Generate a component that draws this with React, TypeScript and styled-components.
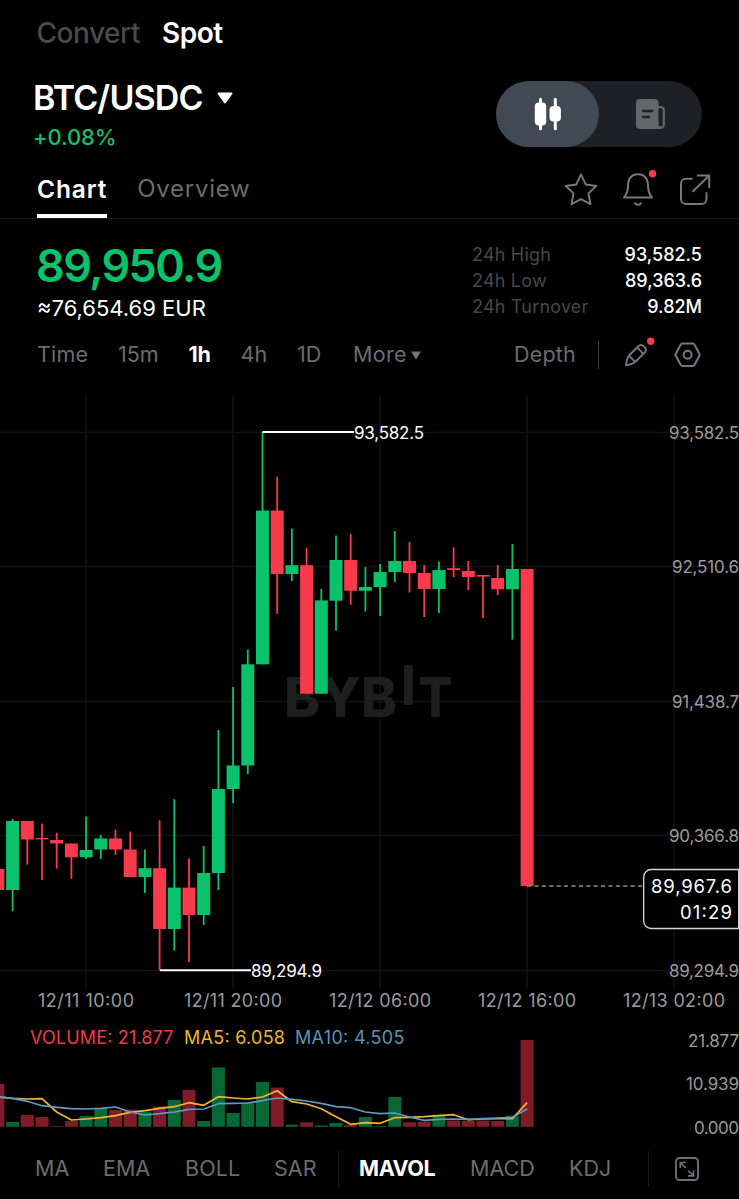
import React from "react";
import styled, { createGlobalStyle } from "styled-components";

const c = {
  green: "#0ac26b",
  red: "#f9394c",
  grey: "#6b6c6f",
  dim: "#47484b",
  axis: "#9b9b9d",
  grid: "#131315",
};

const GlobalStyle = createGlobalStyle`
  html, body { margin: 0; background: #000; }
  body { font-family: Inter, "Liberation Sans", sans-serif; color: #fff; }
  * { box-sizing: border-box; }
  svg { display: block; overflow: visible; }
`;

const Screen = styled.main`
  width: 739px;
  height: 1199px;
  overflow: hidden;
  background: #000;
  display: flex;
  flex-direction: column;

  > * {
    flex-shrink: 0;
  }
`;

const Text = styled.span<{ $size: number; $weight?: number; $color?: string; $track?: number }>`
  display: block;
  margin: 0;
  white-space: nowrap;
  line-height: 1;
  font-size: ${(p) => p.$size}px;
  font-weight: ${(p) => p.$weight ?? 400};
  color: ${(p) => p.$color ?? "#fff"};
  letter-spacing: ${(p) => p.$track ?? 0}px;
`;

const ModeRow = styled.nav`
  height: 66px;
  padding-left: 36.5px;
  display: grid;
  grid-template-columns: 125.500px auto;
  align-items: center;
`;

const PairRow = styled.header`
  height: 92px;
  padding: 15px 37px 0 33px;
  display: flex;
  justify-content: space-between;
  align-items: flex-start;
`;

const Pair = styled.div`
  display: flex;
  flex-direction: column;
  gap: 11px;
`;

const PairName = styled.div`
  display: flex;
  align-items: center;
  gap: 14px;
`;

const Switch = styled.div`
  width: 206px;
  height: 66px;
  border-radius: 33px;
  background: #1f2025;
  display: flex;
`;

const SwitchSide = styled.button<{ $on?: boolean }>`
  width: 103px;
  height: 66px;
  border: 0;
  padding: 0;
  border-radius: 33px;
  background: ${(p) => (p.$on ? "#414954" : "transparent")};
  display: grid;
  place-items: center;
`;

const ViewTabs = styled.nav`
  height: 61px;
  padding: 0 28px 0 37px;
  border-bottom: 1px solid #1b1b1d;
  display: flex;
  justify-content: space-between;
`;

const TabGroup = styled.div`
  display: flex;
  gap: 30px;
`;

const ViewTab = styled.div<{ $on?: boolean }>`
  height: 60px;
  padding-top: 19px;
  border-bottom: ${(p) => (p.$on ? "4px solid #fff" : "0")};
`;

const Actions = styled.div`
  display: flex;
  gap: 25px;
  padding-top: 14px;
`;

const Ticker = styled.section`
  height: 110px;
  padding: 24px 37px 0 36px;
  display: flex;
  justify-content: space-between;
`;

const Price = styled.div`
  display: flex;
  flex-direction: column;
  gap: 9px;

  > :last-child {
    padding-left: 1px;
  }
`;

const Stats = styled.dl`
  margin: -0.500px 0 0;
  width: 230px;
  display: flex;
  flex-direction: column;
`;

const Stat = styled.div`
  height: 25.7px;
  display: flex;
  justify-content: space-between;
  align-items: center;
`;

const Intervals = styled.nav`
  height: 52px;
  padding-left: 37px;
  display: grid;
  grid-template-columns: 81px 70.500px 52px 56.500px 56px 58px 103px 84px 27px 49px 27px;
  align-items: center;
`;

const Divider = styled.i<{ $h: number; $color: string }>`
  width: 1px;
  height: ${(p) => p.$h}px;
  background: ${(p) => p.$color};
`;

const ChartArea = styled.section`
  height: 749px;
`;

const IndicatorBar = styled.footer`
  height: 61px;
  margin-top: 8px;
  padding-left: 35px;
  display: grid;
  grid-template-columns: 68px 82px 89px 64px 21px 111px 99px 79px 27px 30px;
  align-items: center;
`;

const FONT = 'Inter, "Liberation Sans", sans-serif';

type Candle = ["g" | "r", number, number, number, number, number];
// colour, high, body top, body bottom, low, top of the volume bar
const candles: Candle[] = [
  ["r", 869, 869, 890, 890, 1084],
  ["g", 819, 821, 890, 911.3, 1122],
  ["r", 821, 821, 839.5, 864.6, 1115],
  ["r", 823.6, 838, 839.4, 880, 1117],
  ["r", 832.8, 840, 843.5, 868.6, 1126],
  ["r", 843.5, 843.5, 857.3, 878.8, 1121],
  ["g", 816.5, 850, 857.3, 859, 1116],
  ["g", 835, 838.5, 849.5, 859, 1108],
  ["r", 829.5, 838.5, 849.5, 855, 1110],
  ["r", 831.6, 849.5, 877, 877, 1109.5],
  ["g", 849.5, 868.2, 877, 893, 1111.5],
  ["r", 820.2, 868.2, 929, 970.5, 1106.5],
  ["g", 799.2, 887.6, 929, 950.7, 1100],
  ["r", 858.4, 887.6, 915, 962, 1090],
  ["g", 846, 873, 915, 925, 1121],
  ["g", 730, 789, 873, 890, 1067.4],
  ["g", 687, 765.5, 789, 803, 1113],
  ["g", 649.5, 664.3, 765.5, 774, 1102.5],
  ["g", 432, 510.5, 664.3, 664.3, 1082],
  ["r", 476.8, 510.5, 574, 613.8, 1087.6],
  ["g", 528.6, 565.2, 574, 581, 1124.7],
  ["r", 547.7, 565.2, 693.7, 693.7, 1122.3],
  ["g", 589, 600.4, 693.7, 693.7, 1125.4],
  ["g", 535.5, 560, 600.7, 630.7, 1123],
  ["r", 534, 560, 590.8, 604.8, 1125],
  ["g", 567, 587, 590.8, 611.6, 1117],
  ["g", 564, 572, 587.2, 616, 1126],
  ["g", 531, 561, 572, 582, 1097],
  ["r", 542, 561, 573, 592.5, 1122.3],
  ["r", 565, 573, 589, 617, 1121.7],
  ["g", 561.5, 570, 589, 613, 1114.7],
  ["r", 547.5, 568.2, 570, 577.2, 1120.5],
  ["r", 561, 571, 577, 590, 1121],
  ["r", 575, 575, 576.6, 618, 1120.5],
  ["r", 565, 578, 589.3, 595, 1121],
  ["g", 544, 569, 589.3, 639.7, 1115.6],
  ["r", 569, 569, 886, 886, 1040],
];

const STEP = 14.7;
const center = (i: number) => -2.1 + i * STEP;

const ma5 = [
  246, 250, 252, 251, 291, 315, 312, 308, 302, 292, 287, 280, 275, 263, 271, 245, 249, 252, 246, 227, 260, 267, 281,
  305, 328, 323, 325, 308, 307, 305, 302, 299, 314, 312, 311, 311, 263,
];
const ma10 = [
  246, 250, 259, 272, 277, 281, 282, 280, 276, 291, 300, 296, 291, 283, 282, 266, 265, 264, 257, 249, 253, 258, 265,
  275, 278, 291, 296, 294, 306, 316, 313, 312, 313, 311, 309, 307, 282,
];
const toPoints = (v: number[]) => v.map((y, i) => `${center(i).toFixed(1)},${(1015 + y / 3).toFixed(1)}`).join(" ");

const priceLabels: [number, string, number][] = [
  [432.5, "93,582.5", 70],
  [566.5, "92,510.6", 67],
  [701.5, "91,438.7", 67],
  [835.5, "90,366.8", 70],
  [970.5, "89,294.9", 70],
];
const timeLabels: [number, string, number, number][] = [
  [86, "12/11 10:00", 38, 96],
  [233, "12/11 20:00", 184, 98],
  [380, "12/12 06:00", 329, 102],
  [527, "12/12 16:00", 478, 98],
  [674, "12/13 02:00", 623, 102],
];
const volumeLabels: [number, string, number][] = [
  [1047, "21.877", 51],
  [1090, "10.939", 53],
  [1134, "0.000", 45],
];

const StarIcon = () => (
  <svg width="34" height="34" viewBox="563 172 34 34" fill="none" stroke="#77787b" strokeWidth="2" strokeLinejoin="round">
    <path d="M581 174.500l4.700 9.900 10.600 1.500-7.800 7.500 2 10.700-9.500-5-9.500 5 2-10.700-7.800-7.500 10.600-1.500z" />
  </svg>
);
const BellIcon = () => (
  <svg width="32" height="34" viewBox="622 172 32 34" fill="none" stroke="#77787b" strokeWidth="2" strokeLinecap="round" strokeLinejoin="round">
    <path d="M624 197.500h28c-2.600-3.200-3.800-6-3.900-10.500-.1-8-3.600-12.700-10.100-12.700s-10 4.700-10.100 12.700c-.1 4.500-1.300 7.300-3.900 10.500z" />
    <path d="M635 203.300c1.700 2 4.300 2 6 0" />
    <circle cx="652.500" cy="173.700" r="3.700" fill={c.red} stroke="none" />
  </svg>
);
const ShareIcon = () => (
  <svg width="32" height="34" viewBox="679 172 32 34" fill="none" stroke="#77787b" strokeWidth="2">
    <path d="M692.500 178.800H686a5 5 0 0 0-5 5V199a5 5 0 0 0 5 5h15.500a5 5 0 0 0 5-5v-6.800M697 175.500h12.200V188M709 175.700L692.500 191.800" />
  </svg>
);
const CandleIcon = () => (
  <svg width="28" height="34" viewBox="534 97 28 34" fill="#fff">
    <rect x="534.800" y="102.500" width="11.400" height="23" rx="4" />
    <rect x="539" y="97.700" width="3" height="32.500" rx="1.500" />
    <rect x="549.500" y="106" width="11.400" height="15.500" rx="4" />
    <rect x="553.800" y="97.700" width="3" height="32.500" rx="1.500" />
  </svg>
);
const NewsIcon = () => (
  <svg width="30" height="32" viewBox="636 98 30 32">
    <path d="M656 107.200h5.200a2.600 2.600 0 0 1 2.600 2.600v14.700a3.500 3.500 0 0 1-3.500 3.500H650" fill="none" stroke="#65666a" strokeWidth="2.200" />
    <path d="M640 99h14.500a4 4 0 0 1 4 4v26H640a4 4 0 0 1-4-4v-22a4 4 0 0 1 4-4z" fill="#65666a" />
    <path d="M657.500 126h3.500v3h-3.500z" fill="#65666a" />
    <path d="M643 111h9.500M643 117h6" stroke="#1f2025" strokeWidth="2.300" strokeLinecap="round" />
  </svg>
);
const PencilIcon = () => (
  <svg width="24" height="24" viewBox="625 342 24 24" fill="none" stroke="#77787b" strokeWidth="1.900" strokeLinejoin="round">
    <path d="M626.700 364.300q-.8-.3-.7-1.300 .6-4.500 2.700-8L638.300 345.200a4 4 0 0 1 5.400 0l1 1a4 4 0 0 1 0 5.400L634.900 361.300q-3.500 2.200-8.200 3z" />
    <path d="M629.200 354.800l5.900 6M637.300 346.700l6.100 6.200" />
    <circle cx="650.700" cy="340.200" r="3.700" fill={c.red} stroke="none" />
  </svg>
);
const HexIcon = () => (
  <svg width="27" height="26" viewBox="674 342 27 26" fill="none" stroke="#77787b" strokeWidth="2" strokeLinejoin="round">
    <path d="M682.500 343.500h10.200a2 2 0 0 1 1.700 1l5 9.200a2 2 0 0 1 0 2l-5 9.200a2 2 0 0 1-1.700 1h-10.200a2 2 0 0 1-1.700-1l-5-9.200a2 2 0 0 1 0-2l5-9.200a2 2 0 0 1 1.700-1z" />
    <circle cx="687.600" cy="354.700" r="4" />
  </svg>
);
const ExpandIcon = () => (
  <svg width="24" height="24" viewBox="675.500 1156 24 24" fill="none" stroke="#6d6e71" strokeWidth="1.900">
    <rect x="676.500" y="1157" width="22" height="22" rx="3.500" />
    <path d="M680.800 1167v-5.500h5.500M681.200 1162l5 4.900M694 1169.500v5.300h-5.500M693.700 1174.500l-5-4.900" strokeWidth="1.700" />
  </svg>
);

function Chart() {
  return (
    <svg width="739" height="749" viewBox="0 381 739 749" fontFamily={FONT}>
      <g stroke={c.grid} strokeWidth="1.500">
        {priceLabels.map(([y]) => (
          <line key={y} x1="0" x2="739" y1={y} y2={y} />
        ))}
        {timeLabels.map(([x]) => (
          <line key={x} x1={x} x2={x} y1="395" y2="989" />
        ))}
      </g>
      <g fill="#1e1e1e" fontSize="55" fontWeight="800">
        <text x="284" y="717" textLength="113" lengthAdjust="spacingAndGlyphs">BYB</text>
        <rect x="404" y="665.300" width="8.700" height="39.700" />
        <text x="418.500" y="717" textLength="34" lengthAdjust="spacingAndGlyphs">T</text>
      </g>
      {candles.map(([k, hi, top, bottom, lo, vol], i) => (
        <g key={i}>
          <g fill={k === "g" ? c.green : c.red}>
            <rect x={center(i) - 0.9} y={hi} width="1.800" height={lo - hi} />
            <rect x={center(i) - 6.5} y={top} width="13" height={bottom - top} />
          </g>
          <rect x={center(i) - 6.5} y={vol} width="13" height={1126.8 - vol} fill={k === "g" ? "#076735" : "#7f1c27"} />
        </g>
      ))}
      <path d="M262.500 432H354M160 970.300H251" stroke="#fff" strokeWidth="1.900" />
      <path d="M527 886H644" stroke="#8b8b8b" strokeWidth="1.300" strokeDasharray="4.200 3.200" />
      <g fill="#fff" fontSize="17">
        <text x="354" y="439" textLength="70">93,582.5</text>
        <text x="251" y="977" textLength="71">89,294.9</text>
      </g>
      <g fill={c.axis} fontSize="17">
        {priceLabels.map(([y, s, w]) => (
          <text key={s} x={739 - w} y={y + 6.7} textLength={w}>{s}</text>
        ))}
        {volumeLabels.map(([y, s, w]) => (
          <text key={s} x={739 - w} y={y} textLength={w}>{s}</text>
        ))}
      </g>
      <g fill={c.axis} fontSize="18">
        {timeLabels.map(([, s, left, w]) => (
          <text key={s} x={left} y="1007.300" textLength={w}>{s}</text>
        ))}
      </g>
      <path d="M740 869.500H651.200a7.500 7.500 0 0 0-7.500 7.500v44a7.500 7.500 0 0 0 7.500 7.500H740" fill="#000" stroke="#d6d6d6" strokeWidth="1.300" />
      <path d="M738.500 869V929" stroke="#d6d6d6" strokeWidth="1" />
      <g fill="#fff" fontSize="18.500">
        <text x="651" y="893.300" textLength="81">89,967.6</text>
        <text x="680" y="919" textLength="52">01:29</text>
      </g>
      <g fontSize="18">
        <text x="30" y="1044.300" fill="#ee3a4f" textLength="143.500">VOLUME: 21.877</text>
        <text x="184" y="1044.300" fill="#f0b52f" textLength="101">MA5: 6.058</text>
        <text x="295" y="1044.300" fill="#5a93b8" textLength="109.500">MA10: 4.505</text>
      </g>
      <g fill="none" strokeWidth="1.700" strokeLinejoin="round">
        <polyline points={toPoints(ma5)} stroke="#f2b437" />
        <polyline points={toPoints(ma10)} stroke="#5d9bc4" />
      </g>
    </svg>
  );
}

export default function App() {
  return (
    <Screen>
      <GlobalStyle />
      <ModeRow>
        <Text $size={28} $weight={500} $color="#4a4a4b" $track={-0.45}>Convert</Text>
        <Text $size={28} $weight={600} $track={-0.5}>Spot</Text>
      </ModeRow>
      <PairRow>
        <Pair>
          <PairName>
            <Text $size={34} $weight={600} $track={-0.85}>BTC/USDC</Text>
            <svg width="16" height="12" viewBox="0 0 16 12" fill="#fff" stroke="#fff" strokeWidth="2" strokeLinejoin="round">
              <path d="M1.500 1.500h13L8 10.500z" />
            </svg>
          </PairName>
          <Text $size={22} $weight={500} $color="#14c06b" $track={-0.15}>+0.08%</Text>
        </Pair>
        <Switch>
          <SwitchSide $on><CandleIcon /></SwitchSide>
          <SwitchSide><NewsIcon /></SwitchSide>
        </Switch>
      </PairRow>
      <ViewTabs>
        <TabGroup>
          <ViewTab $on><Text $size={24.5} $weight={600} $track={0.85}>Chart</Text></ViewTab>
          <ViewTab><Text $size={24} $color={c.grey} $track={0.75}>Overview</Text></ViewTab>
        </TabGroup>
        <Actions><StarIcon /><BellIcon /><ShareIcon /></Actions>
      </ViewTabs>
      <Ticker>
        <Price>
          <Text $size={45} $weight={600} $color={c.green} $track={-1.6}>89,950.9</Text>
          <Text $size={22}>≈76,654.69 EUR</Text>
        </Price>
        <Stats>
          {[["24h High", "93,582.5"], ["24h Low", "89,363.6"], ["24h Turnover", "9.82M"]].map(([k, v]) => (
            <Stat key={k}>
              <Text as="dt" $size={18} $color={c.dim} $track={0.2}>{k}</Text>
              <Text as="dd" $size={18} $weight={500}>{v}</Text>
            </Stat>
          ))}
        </Stats>
      </Ticker>
      <Intervals>
        <Text $size={21.5} $color={c.grey} $track={0.2}>Time</Text>
        <Text $size={21.5} $color={c.grey}>15m</Text>
        <Text $size={21.5} $weight={700} $track={-0.3}>1h</Text>
        <Text $size={21.5} $color={c.grey}>4h</Text>
        <Text $size={21.5} $color={c.grey}>1D</Text>
        <Text $size={21.5} $color={c.grey} $track={0.3}>More</Text>
        <svg width="10" height="9" viewBox="0 0 10 9" fill="#77787b"><path d="M0 0.500h10L5 8.500z" /></svg>
        <Text $size={21.5} $color={c.grey} $track={0.2}>Depth</Text>
        <Divider $h={28} $color="#3a3a3c" />
        <PencilIcon />
        <HexIcon />
      </Intervals>
      <ChartArea><Chart /></ChartArea>
      <IndicatorBar>
        <Text $size={21.5} $color={c.grey}>MA</Text>
        <Text $size={21.5} $color={c.grey}>EMA</Text>
        <Text $size={21.5} $color={c.grey} $track={0.1}>BOLL</Text>
        <Text $size={21.5} $color={c.grey}>SAR</Text>
        <Divider $h={36} $color="#1b1b1d" />
        <Text $size={21.5} $weight={700} $track={-0.4}>MAVOL</Text>
        <Text $size={21.5} $color={c.grey}>MACD</Text>
        <Text $size={21.5} $color={c.grey}>KDJ</Text>
        <Divider $h={36} $color="#1b1b1d" />
        <ExpandIcon />
      </IndicatorBar>
    </Screen>
  );
}
